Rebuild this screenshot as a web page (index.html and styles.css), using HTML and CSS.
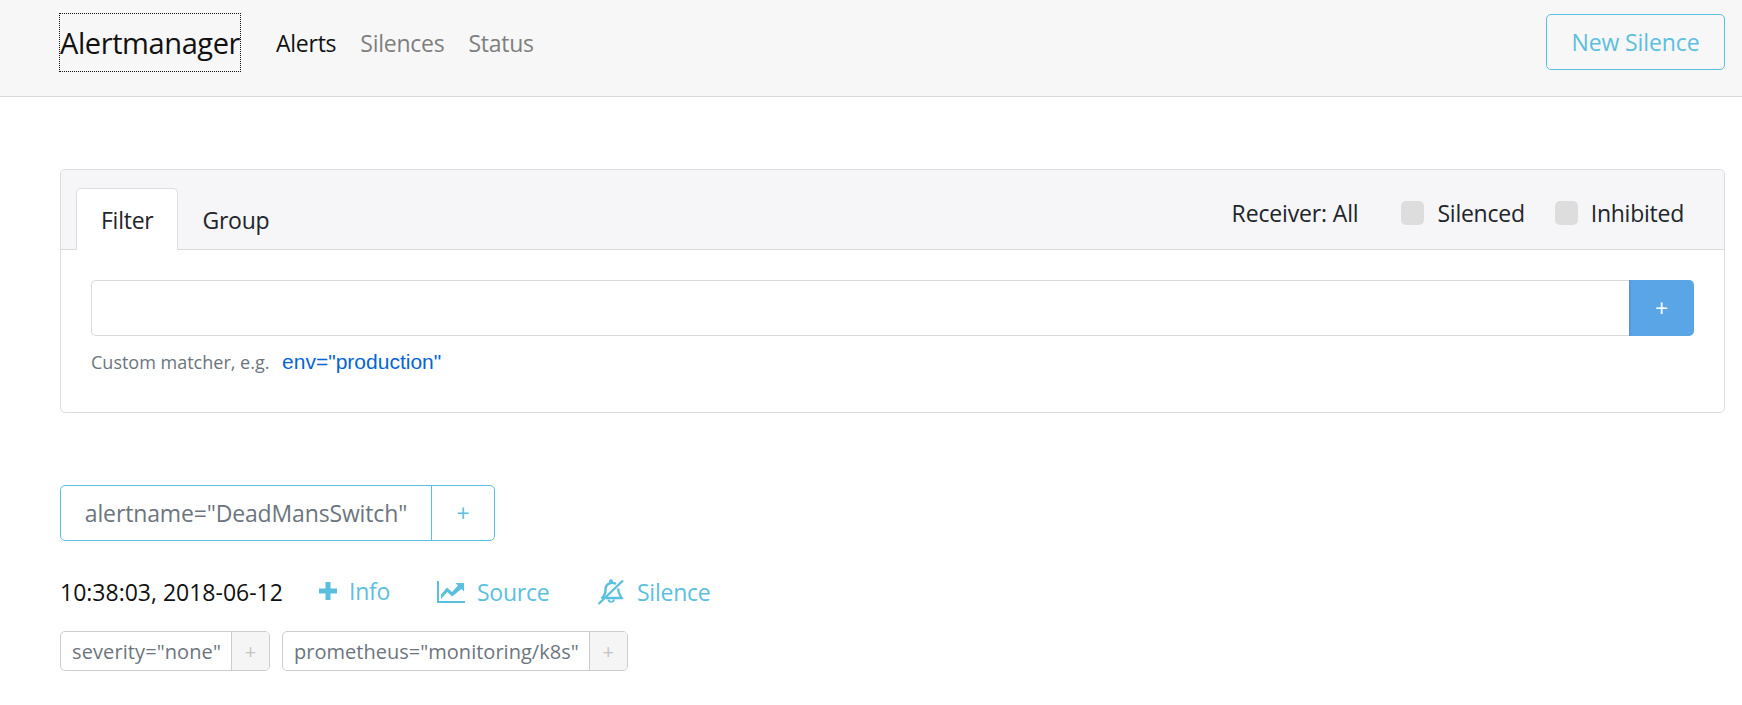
FILE: index.html
```html
<!DOCTYPE html>
<html lang="en">
<head>
<meta charset="utf-8">
<title>Alertmanager</title>
<link rel="stylesheet" href="styles.css">
</head>
<body>
<header class="navbar">
  <a class="brand">Alertmanager</a>
  <nav class="nav">
    <a class="nav-link active">Alerts</a>
    <a class="nav-link">Silences</a>
    <a class="nav-link">Status</a>
  </nav>
  <a class="new-silence">New Silence</a>
</header>
<main class="content">
  <section class="card">
    <div class="card-header">
      <div class="tabs">
        <a class="tab active">Filter</a>
        <a class="tab">Group</a>
      </div>
      <div class="filters">
        <span class="receiver">Receiver: All</span>
        <label class="check"><span class="box"></span>Silenced</label>
        <label class="check"><span class="box"></span>Inhibited</label>
      </div>
    </div>
    <div class="card-body">
      <div class="input-group">
        <div class="input"></div>
        <button class="add">+</button>
      </div>
      <p class="hint">Custom matcher, e.g. <code class="example">env="production"</code></p>
    </div>
  </section>
  <div class="group-pill">
    <span class="group-name">alertname="DeadMansSwitch"</span>
    <span class="group-add">+</span>
  </div>
  <div class="alert-row">
    <span class="time">10:38:03, 2018-06-12</span>
    <a class="action info">
      <svg class="icon plus" viewBox="0 0 20 20"><path d="M7.500 1h5v6.500h6.500v5h-6.500v6.500h-5v-6.500h-6.500v-5h6.500z"/></svg><span class="info-text">Info</span>
    </a>
    <a class="action source">
      <svg class="icon chart" viewBox="0 0 28 22"><path d="M0 0h2v20h26v2H0z"/><path d="M4 18v-4.500l6-7 5 4.500 6-6.500-2.500-2.500H27v8.500l-2.600-2.600L15.200 15.500l-5-4.500z"/></svg>Source
    </a>
    <a class="action silence">
      <svg class="icon bell" viewBox="0 0 28 26"><path class="line" d="M1.500 25 26 1.500"/><path class="line" d="M4.500 19.500c2.500-2 4-4.500 4-8.500 0-4 2.500-6.500 5.500-7 2-.3 3.500 0 5 1M21 9.500c.2 4 1.500 6.500 3.500 9.500H9"/><path d="M10.500 20.500a3.800 3.800 0 0 0 7.500 0h-2a1.700 1.700 0 0 1-3.400 0z"/><circle cx="14" cy="2.300" r="2"/></svg>Silence
    </a>
  </div>
  <div class="labels">
    <div class="label"><span class="label-name severity">severity="none"</span><span class="label-add">+</span></div>
    <div class="label"><span class="label-name">prometheus="monitoring/k8s"</span><span class="label-add">+</span></div>
  </div>
</main>
</body>
</html>
```
FILE: styles.css
```css
* { box-sizing: border-box; }
html, body { margin: 0; height: 705px; overflow: hidden; }
body {
  background: #fff;
  color: #212529;
  font-family: "Open Sans", "Noto Sans", sans-serif;
  font-size: 23px;
  letter-spacing: -0.25px;
}
a { text-decoration: none; }

.navbar {
  display: flex;
  align-items: flex-start;
  height: 97px;
  padding: 13px 17px 0 59px;
  background: #f7f7f7;
  border-bottom: 1px solid #d9d9d9;
}
.brand {
  width: 182px;
  height: 59px;
  margin-right: 35px;
  padding-top: 11px;
  outline: 1px dotted #111;
  outline-offset: -1px;
  font-size: 29px;
  line-height: 38px;
  letter-spacing: -0.4px;
  color: #111;
  text-align: center;
  white-space: nowrap;
}
.nav { display: flex; gap: 24px; flex: 1; padding-top: 14px; }
.nav-link { color: #7f7f7f; line-height: 32px; }
.nav-link.active { color: #111; }
.new-silence {
  width: 179px;
  height: 56px;
  margin-top: 1px;
  border: 1px solid #5bc0de;
  border-radius: 5px;
  color: #5bc0de;
  line-height: 54px;
  letter-spacing: -0.1px;
  text-align: center;
}

.content { padding: 72px 17px 0 60px; }

.card {
  height: 244px;
  border: 1px solid #dedede;
  border-radius: 5px;
}
.card-header {
  display: flex;
  justify-content: space-between;
  height: 80px;
  padding: 18px 40px 0 15px;
  background: #f6f6f8;
  border-bottom: 1px solid #d9d9d9;
  border-radius: 5px 5px 0 0;
}
.tabs { display: flex; gap: 0; }
.tab {
  height: 62px;
  padding: 0 23px 0 24px;
  border: 1px solid transparent;
  border-radius: 5px 5px 0 0;
  line-height: 62px;
  text-align: center;
}
.tab.active {
  background: #fff;
  border-color: #dedede;
  border-bottom-color: #fff;
}
.filters { display: flex; align-items: flex-start; padding-top: 9px; }
.receiver { line-height: 32px; margin-right: 43px; letter-spacing: -0.15px; }
.check { display: flex; align-items: center; line-height: 32px; }
.check + .check { margin-left: 30px; }
.box {
  width: 23px;
  height: 24px;
  margin-right: 13px;
  background: #dddddd;
  border-radius: 5px;
}

.card-body { padding: 30px 30px 0 30px; }
.input-group { display: flex; height: 56px; }
.input {
  flex: 1;
  border: 1px solid #d9d9d9;
  border-right: 0;
  border-radius: 5px 0 0 5px;
}
.add {
  width: 65px;
  padding: 0 2px 0 0;
  background: #5aa5e6;
  border: 0;
  border-left: 2px solid #4f9ae0;
  border-radius: 0 5px 5px 0;
  color: #fff;
  font: inherit;
}
.hint {
  margin: 12px 0 0;
  color: #6c757d;
  font-size: 18px;
  line-height: 28px;
  letter-spacing: 0;
}
.example {
  margin-left: 8px;
  color: #0366d6;
  font-family: "Liberation Sans", Arial, sans-serif;
  font-size: 21px;
  letter-spacing: 0;
}

.group-pill {
  display: inline-flex;
  height: 56px;
  margin-top: 72px;
  border: 1px solid #5bc0de;
  border-radius: 5px;
  color: #6c757d;
  line-height: 54px;
}
.group-name { width: 370px; text-align: center; white-space: nowrap; letter-spacing: -0.15px; }
.group-add {
  width: 63px;
  border-left: 1px solid #5bc0de;
  color: #5bc0de;
  text-align: center;
}

.alert-row { display: flex; align-items: center; height: 30px; margin-top: 36px; }
.time { width: 258px; color: #111; white-space: nowrap; letter-spacing: 0; }
.action { display: flex; align-items: center; color: #5bc0de; }
.icon { fill: #5bc0de; flex: none; }
.plus { width: 20px; height: 20px; margin-right: 11px; margin-top: -2px; }
.info { width: 119px; }
.info-text { margin-top: -2px; }
.chart { width: 28px; height: 22px; margin-right: 12px; }
.source { width: 160px; }
.bell { width: 28px; height: 26px; margin-right: 12px; }
.line { fill: none; stroke: #5bc0de; stroke-width: 2.400; }

.labels { display: flex; gap: 12px; margin-top: 24px; }
.label {
  display: flex;
  height: 40px;
  border: 1px solid #cccccc;
  border-radius: 5px;
  color: #6c757d;
  font-size: 20px;
  line-height: 39px;
  letter-spacing: 0.02px;
}
.label-name { padding: 0 10px 0 11px; white-space: nowrap; }
.label-name.severity { letter-spacing: 0.1px; }
.label-add {
  width: 38px;
  background: #f5f5f5;
  border-left: 1px solid #cccccc;
  border-radius: 0 4px 4px 0;
  color: #c4c4c4;
  text-align: center;
}
```
